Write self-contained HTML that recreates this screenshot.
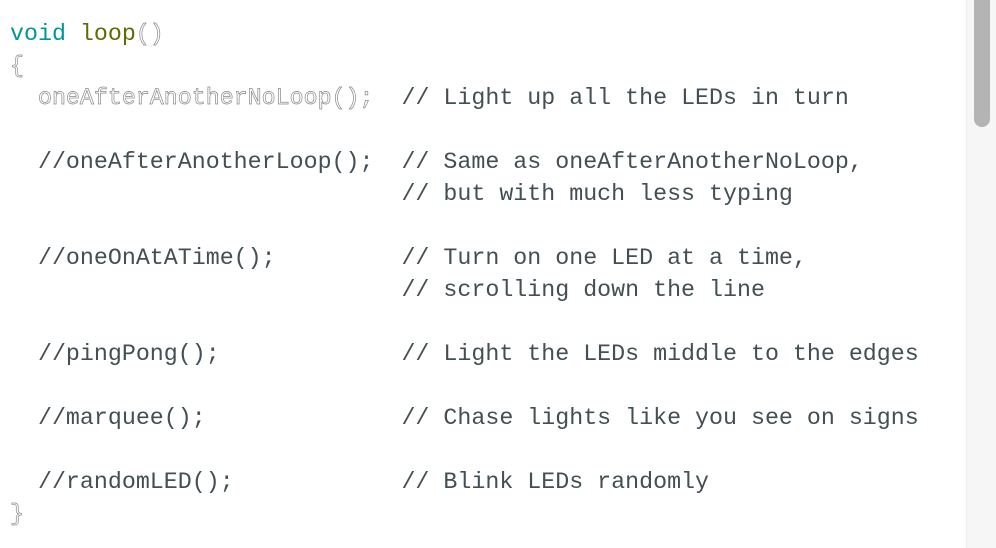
<!DOCTYPE html>
<html><head><meta charset="utf-8"><style>
html,body{margin:0;padding:0;background:#fff;width:996px;height:548px;overflow:hidden}
pre{position:absolute;left:10px;top:18px;margin:0;font-family:"Liberation Mono",monospace;font-size:23.3px;line-height:32px;color:#434f54;letter-spacing:0}
.k{color:#00979c}.f{color:#5e6d03}
.o{color:#fff;-webkit-text-stroke:0.7px #8a8a8a}
.track{position:absolute;left:966px;top:0;width:30px;height:548px;background:#f6f6f6;border-left:1px solid #eee}
.thumb{position:absolute;left:974px;top:0;width:16px;height:127px;background:#b4b4b4;border-radius:0 0 8px 8px}
</style></head><body>
<pre><span class="k">void</span> <span class="f">loop</span><span class="o">()</span>
<span class="o">{</span>
  <span class="o">oneAfterAnotherNoLoop();</span>  // Light up all the LEDs in turn

  //oneAfterAnotherLoop();  // Same as oneAfterAnotherNoLoop,
                            // but with much less typing

  //oneOnAtATime();         // Turn on one LED at a time,
                            // scrolling down the line

  //pingPong();             // Light the LEDs middle to the edges

  //marquee();              // Chase lights like you see on signs

  //randomLED();            // Blink LEDs randomly
<span class="o">}</span></pre>
<div class="track"></div><div class="thumb"></div>
</body></html>
